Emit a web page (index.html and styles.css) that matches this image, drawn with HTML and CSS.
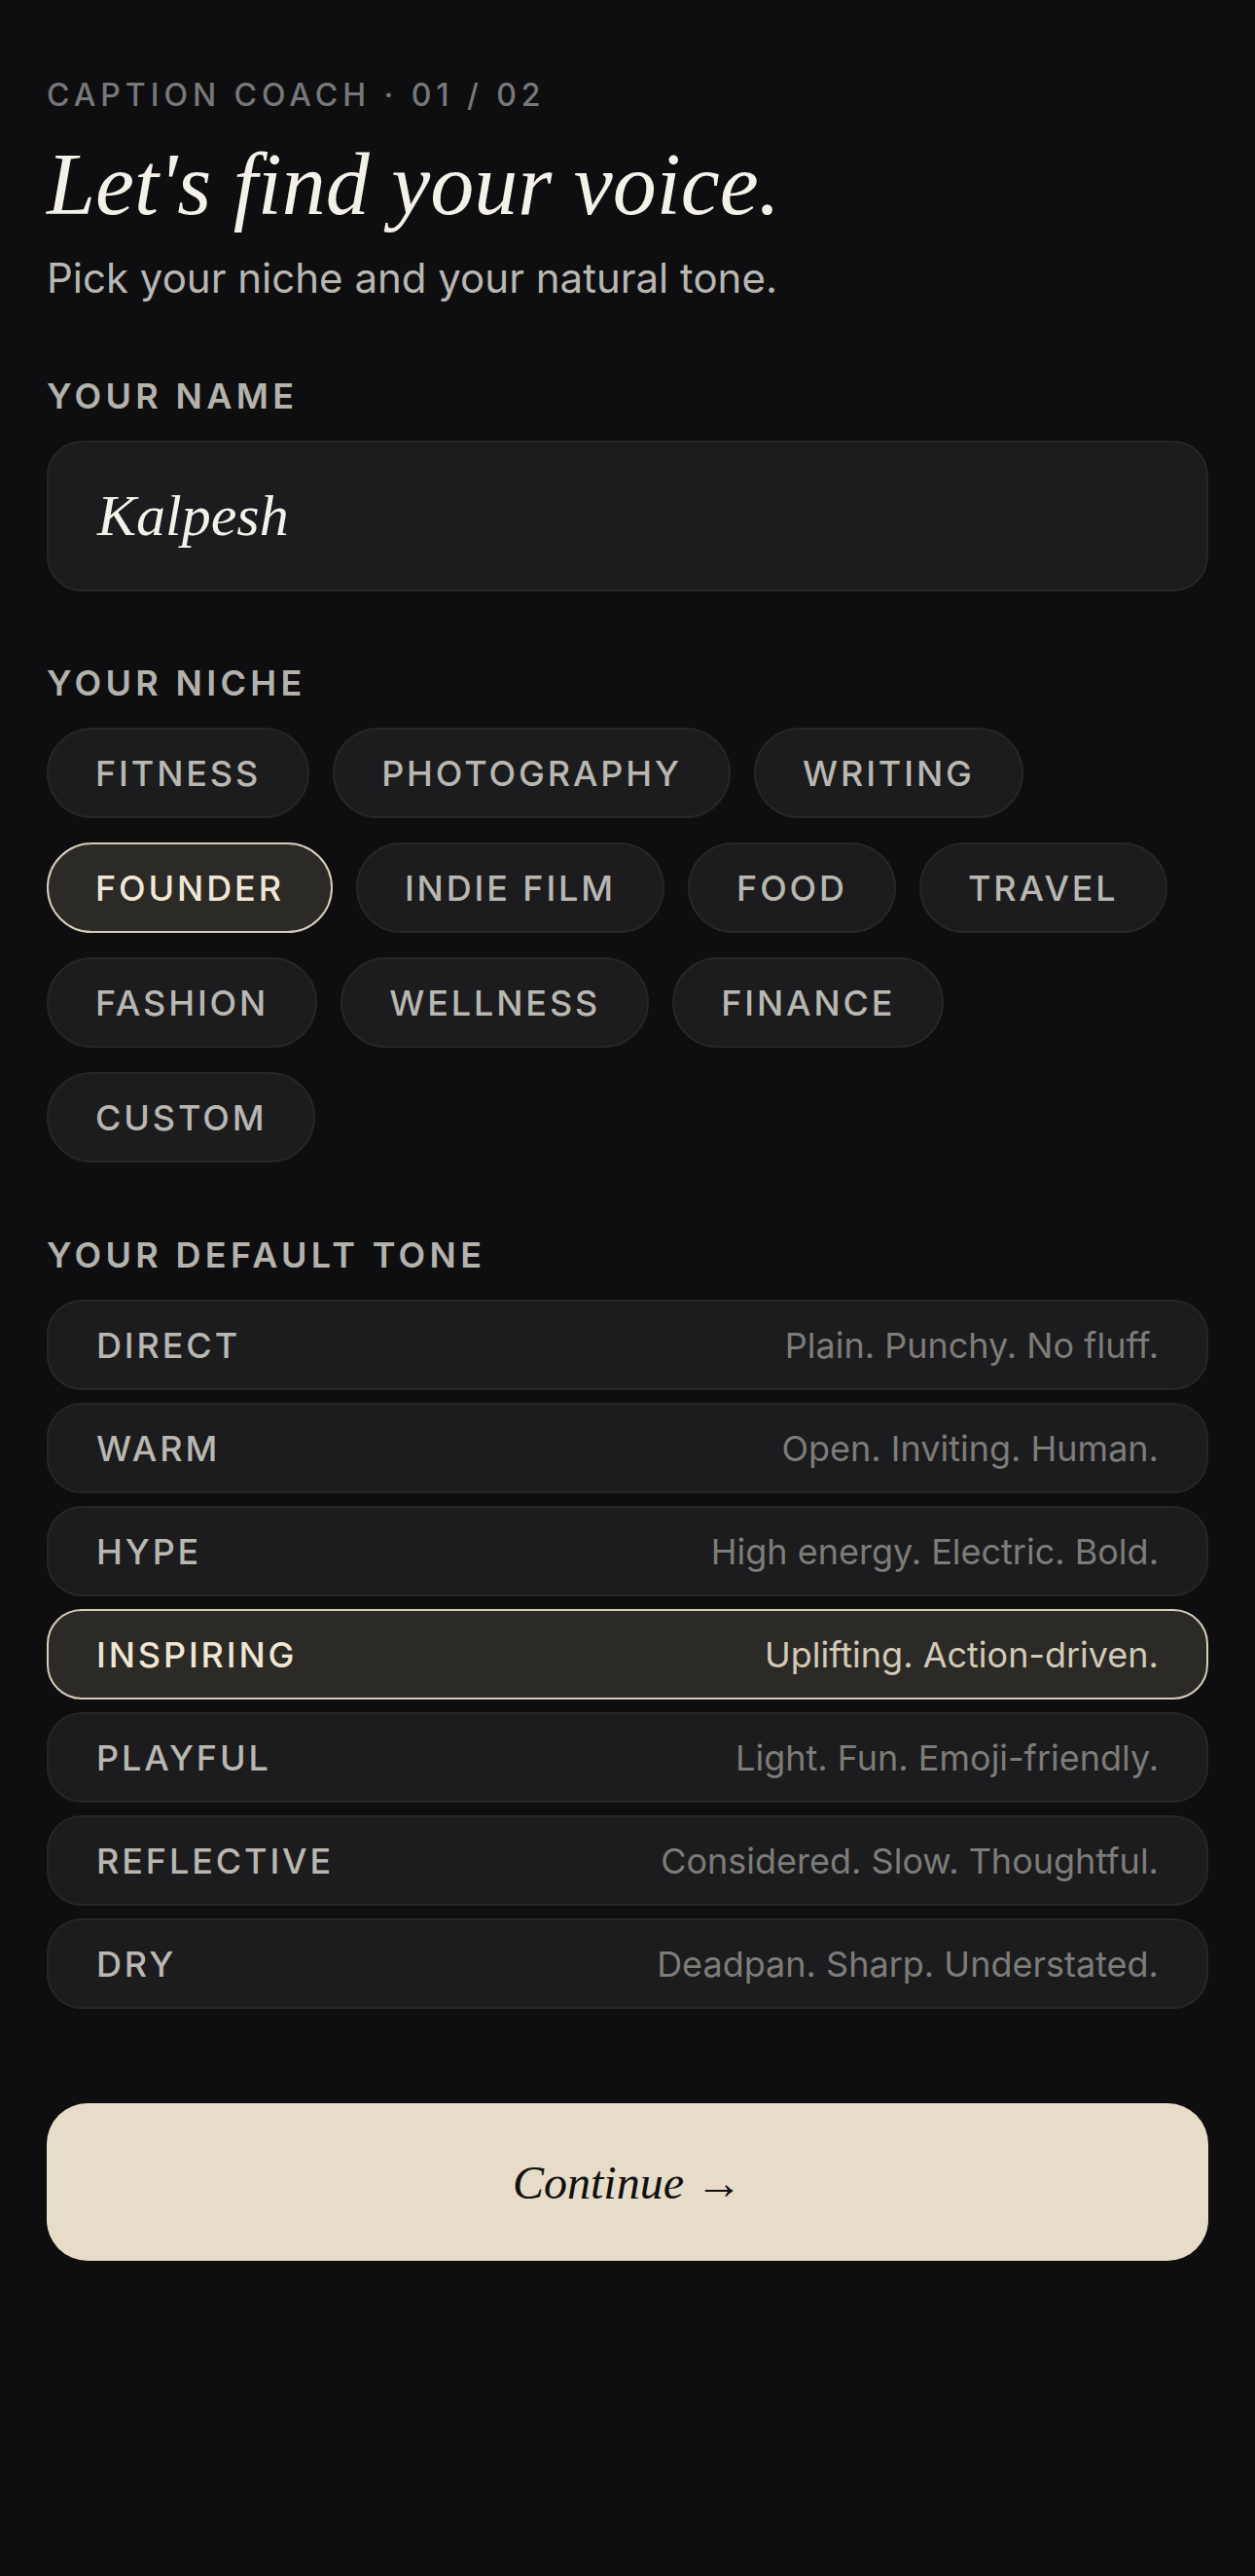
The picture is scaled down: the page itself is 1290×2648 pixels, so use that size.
FILE: index.html
```html
<!DOCTYPE html>
<html>

<head>
    <title>Caption Coach</title>
    <meta name="viewport" content="width=device-width, initial-scale=1.0">
    <link rel="stylesheet" href="styles.css">
</head>

<body>
    <div class="screen">
        <p class="eyebrow">CAPTION COACH · 01 / 02</p>
        <h1 class="title">Let's find your voice.</h1>
        <p class="subtitle">Pick your niche and your natural tone.</p>

        <section class="block first">
            <h2 class="label">YOUR NAME</h2>
            <div class="name-field">Kalpesh</div>
        </section>

        <section class="block">
            <h2 class="label">YOUR NICHE</h2>
            <div class="chips">
                <span class="chip">FITNESS</span>
                <span class="chip">PHOTOGRAPHY</span>
                <span class="chip">WRITING</span>
                <span class="chip selected">FOUNDER</span>
                <span class="chip">INDIE FILM</span>
                <span class="chip">FOOD</span>
                <span class="chip">TRAVEL</span>
                <span class="chip">FASHION</span>
                <span class="chip">WELLNESS</span>
                <span class="chip">FINANCE</span>
                <span class="chip">CUSTOM</span>
            </div>
        </section>

        <section class="block tone-block">
            <h2 class="label">YOUR DEFAULT TONE</h2>
            <div class="tones">
                <div class="tone"><span class="tone-name">DIRECT</span><span class="tone-desc">Plain. Punchy. No fluff.</span></div>
                <div class="tone"><span class="tone-name">WARM</span><span class="tone-desc">Open. Inviting. Human.</span></div>
                <div class="tone"><span class="tone-name">HYPE</span><span class="tone-desc">High energy. Electric. Bold.</span></div>
                <div class="tone selected"><span class="tone-name">INSPIRING</span><span class="tone-desc">Uplifting. Action-driven.</span></div>
                <div class="tone"><span class="tone-name">PLAYFUL</span><span class="tone-desc">Light. Fun. Emoji-friendly.</span></div>
                <div class="tone"><span class="tone-name">REFLECTIVE</span><span class="tone-desc">Considered. Slow. Thoughtful.</span></div>
                <div class="tone"><span class="tone-name">DRY</span><span class="tone-desc">Deadpan. Sharp. Understated.</span></div>
            </div>
        </section>

        <button class="continue">Continue →</button>
    </div>
</body>

</html>
```

FILE: styles.css
```css
body {
    margin: 0;
    padding: 0;
    background-color: #0e0e10;
    font-family: Inter, "Noto Sans", sans-serif;
    min-height: 100vh;
}

.screen {
    display: flex;
    flex-direction: column;
    padding: 78px 48px 80px;
}

.eyebrow {
    margin: 0;
    font-size: 32px;
    line-height: 40px;
    font-weight: 500;
    letter-spacing: 0.155em;
    color: #78787a;
}

.title {
    margin: 22px 0 0;
    font-family: "Liberation Serif", serif;
    font-style: italic;
    font-weight: 400;
    font-size: 90px;
    line-height: 100px;
    color: #f4f1ea;
}

.subtitle {
    margin: 21px 0 0;
    font-size: 42px;
    line-height: 50px;
    color: #b9b7b1;
}

.block {
    margin-top: 72px;
}

.block.first {
    margin-top: 74px;
}

.block.tone-block {
    margin-top: 73px;
}

.label {
    margin: 0 0 24px;
    font-size: 36px;
    line-height: 44px;
    font-weight: 600;
    letter-spacing: 0.12em;
    color: #b4b2ac;
}

.name-field {
    height: 155px;
    box-sizing: border-box;
    display: flex;
    align-items: center;
    padding: 0 50px;
    background-color: #1c1c1e;
    border: 2px solid #262629;
    border-radius: 36px;
    font-family: "Liberation Serif", serif;
    font-style: italic;
    font-size: 60px;
    color: #f4f1ea;
}

.chips {
    display: flex;
    flex-wrap: wrap;
    gap: 25px 24px;
}

.chip {
    height: 93px;
    box-sizing: border-box;
    display: flex;
    align-items: center;
    padding: 0 48px;
    background-color: #1c1c1e;
    border: 2px solid #262629;
    border-radius: 999px;
    font-size: 36px;
    font-weight: 500;
    letter-spacing: 0.08em;
    color: #b9b7b1;
}

.chip.selected {
    background-color: #2c2a27;
    border-color: #d6cdb9;
    color: #efe7d4;
}

.tones {
    display: flex;
    flex-direction: column;
    gap: 13px;
}

.tone {
    height: 93px;
    box-sizing: border-box;
    display: flex;
    align-items: center;
    justify-content: space-between;
    padding: 0 49px;
    background-color: #1c1c1e;
    border: 2px solid #262629;
    border-radius: 36px;
}

.tone-name {
    font-size: 36px;
    font-weight: 500;
    letter-spacing: 0.08em;
    color: #b9b7b1;
}

.tone-desc {
    font-size: 36px;
    color: #7d7c79;
}

.tone.selected {
    background-color: #2c2a27;
    border-color: #d6cdb9;
}

.tone.selected .tone-name {
    color: #efe7d4;
}

.tone.selected .tone-desc {
    color: #d2cab8;
}

.continue {
    margin-top: 97px;
    height: 162px;
    border: none;
    border-radius: 42px;
    background-color: #e6dcc8;
    color: #111111;
    font-family: "Liberation Serif", serif;
    font-style: italic;
    font-size: 48px;
    cursor: pointer;
}
```
